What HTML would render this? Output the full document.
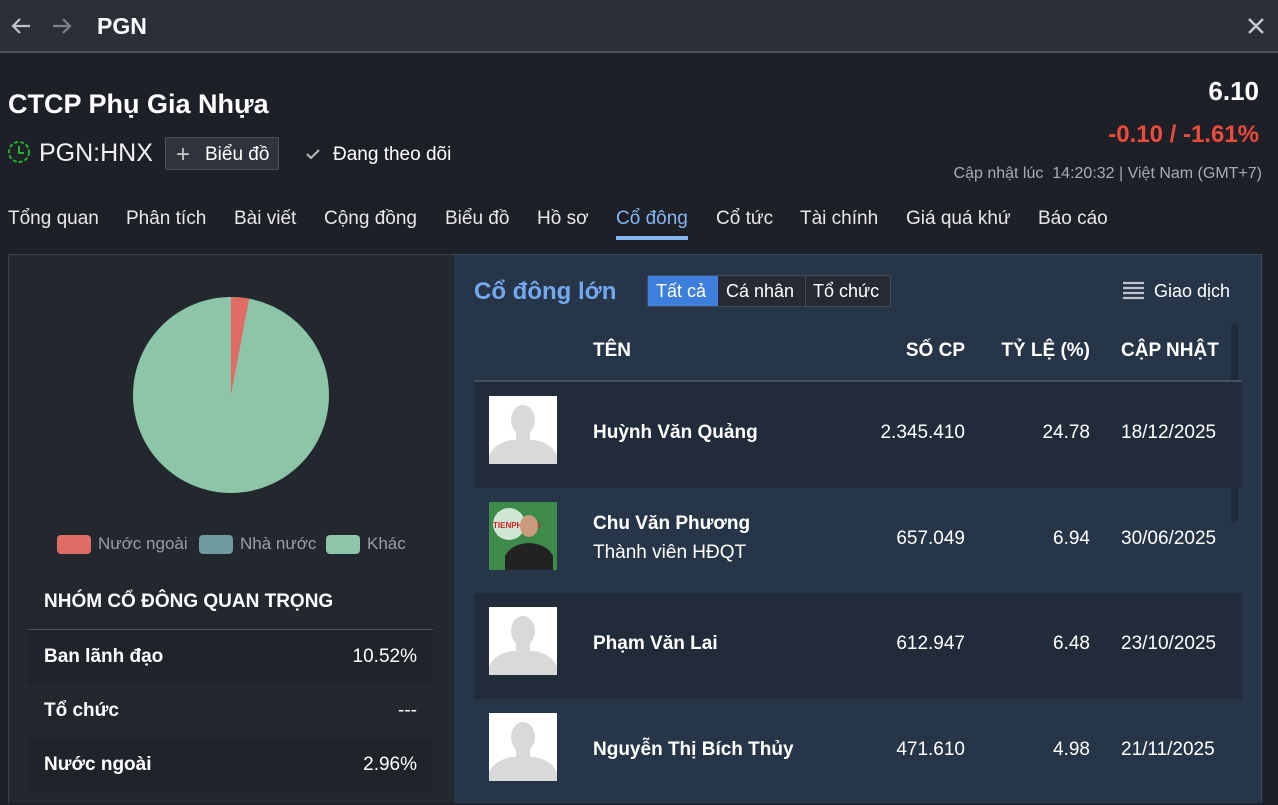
<!DOCTYPE html>
<html><head><meta charset="utf-8"><style>
*{margin:0;padding:0;box-sizing:border-box}
body{width:1278px;height:803px;overflow:hidden;background:#1d2027;font-family:"Liberation Sans",sans-serif;color:#fff;position:relative}
.a{position:absolute;white-space:nowrap}
.top{position:absolute;left:0;top:0;width:1278px;height:53px;background:#2b2f38;border-bottom:2px solid #4a4e56}
.tab{position:absolute;top:208px;font-size:19px;color:#e8e8e8}
.lrow{position:absolute;left:28px;width:405px;height:54px}
.lrow span{position:absolute;top:16px;font-size:19px;font-weight:bold}
.lrow b{position:absolute;right:16px;top:16px;font-size:19px;font-weight:normal}
.row{position:absolute;left:474px;width:768px;height:106px}
.av{position:absolute;left:15px;top:14px;width:68px;height:68px;background:#fff;overflow:hidden}
.nm{position:absolute;left:119px;font-size:19px;font-weight:bold}
.c1{position:absolute;right:277px;font-size:19px}
.c2{position:absolute;right:152px;font-size:19px}
.c3{position:absolute;left:647px;font-size:19px}
</style></head><body>
<div class="top">
<svg class="a" style="left:10px;top:16px" width="22" height="20" viewBox="0 0 22 20"><path d="M20 10H3M10 3L3 10l7 7" stroke="#bfc2c7" stroke-width="2.2" fill="none"/></svg>
<svg class="a" style="left:51px;top:16px" width="22" height="20" viewBox="0 0 22 20"><path d="M2 10h17M12 3l7 7-7 7" stroke="#7d8189" stroke-width="2.2" fill="none"/></svg>
<div class="a" style="left:97px;top:13px;font-size:23px;font-weight:bold">PGN</div>
<svg class="a" style="left:1247px;top:17px" width="18" height="18" viewBox="0 0 18 18"><path d="M2 2l14 14M16 2L2 16" stroke="#c8cbd0" stroke-width="2.4"/></svg>
</div>
<div class="a" style="left:8px;top:89px;font-size:27px;font-weight:bold">CTCP Phụ Gia Nhựa</div>
<svg class="a" style="left:7px;top:140px" width="26" height="26" viewBox="0 0 26 26"><circle cx="12" cy="12" r="10" stroke="#1fb52e" stroke-width="2" fill="none" stroke-dasharray="4 2"/><path d="M12 6v7h5" stroke="#1fb52e" stroke-width="2" fill="none"/></svg>
<div class="a" style="left:39px;top:139px;font-size:25px;color:#f2f2f2">PGN:HNX</div>
<div class="a" style="left:165px;top:137px;width:114px;height:33px;background:#2e333c;border:1px solid #4a4f58;border-radius:2px"></div>
<div class="a" style="left:176px;top:141px;font-size:24px;color:#c8c8c8">+</div>
<div class="a" style="left:205px;top:144px;font-size:19px">Biểu đồ</div>
<svg class="a" style="left:305px;top:147px" width="16" height="14" viewBox="0 0 16 14"><path d="M2 7l4 4 8-8" stroke="#bbb" stroke-width="2" fill="none"/></svg>
<div class="a" style="left:333px;top:144px;font-size:19px">Đang theo dõi</div>
<div class="a" style="right:19px;top:76px;font-size:26px;font-weight:bold">6.10</div>
<div class="a" style="right:19px;top:121px;font-size:24px;font-weight:bold;color:#ee4b3b">-0.10 / -1.61%</div>
<div class="a" style="right:16px;top:165px;font-size:16px;color:#a9adb3">Cập nhật lúc&nbsp; 14:20:32 | Việt Nam (GMT+7)</div>
<div class="tab" style="left:8px">Tổng quan</div>
<div class="tab" style="left:126px">Phân tích</div>
<div class="tab" style="left:234px">Bài viết</div>
<div class="tab" style="left:324px">Cộng đồng</div>
<div class="tab" style="left:445px">Biểu đồ</div>
<div class="tab" style="left:537px">Hồ sơ</div>
<div class="tab" style="left:616px;color:#86b6f2">Cổ đông</div>
<div class="a" style="left:616px;top:236px;width:72px;height:4px;background:#86b6f2"></div>
<div class="tab" style="left:716px">Cổ tức</div>
<div class="tab" style="left:800px">Tài chính</div>
<div class="tab" style="left:906px">Giá quá khứ</div>
<div class="tab" style="left:1038px">Báo cáo</div>

<div class="a" style="left:8px;top:254px;width:447px;height:549px;background:#23272e;border:1px solid #3a3f48;border-bottom:none"></div>
<div class="a" style="left:454px;top:254px;width:808px;height:549px;background:#273548;border-top:1px solid #3a4a60;border-right:1px solid #3a4a60"></div>

<svg class="a" style="left:133px;top:297px" width="196" height="196" viewBox="0 0 196 196"><circle cx="98" cy="98" r="98" fill="#8cc5a8"/><path d="M98 98L98 0A98 98 0 0 1 116.1 1.7Z" fill="#e06c66"/></svg>
<div class="a" style="left:57px;top:535px;width:34px;height:19px;background:#e06c66;border-radius:4px"></div>
<div class="a" style="left:98px;top:534px;font-size:17px;color:#9a9ea4">Nước ngoài</div>
<div class="a" style="left:199px;top:535px;width:34px;height:19px;background:#6f9aa0;border-radius:4px"></div>
<div class="a" style="left:240px;top:534px;font-size:17px;color:#9a9ea4">Nhà nước</div>
<div class="a" style="left:326px;top:535px;width:34px;height:19px;background:#8cc5a8;border-radius:4px"></div>
<div class="a" style="left:367px;top:534px;font-size:17px;color:#9a9ea4">Khác</div>
<div class="a" style="left:44px;top:591px;font-size:19px;font-weight:bold">NHÓM CỔ ĐÔNG QUAN TRỌNG</div>
<div class="a" style="left:28px;top:629px;width:405px;height:1px;background:#4e535b"></div>
<div class="lrow" style="top:630px;background:#1f232a"><span style="left:16px">Ban lãnh đạo</span><b>10.52%</b></div>
<div class="lrow" style="top:684px"><span style="left:16px">Tổ chức</span><b>---</b></div>
<div class="lrow" style="top:738px;background:#1f232a"><span style="left:16px">Nước ngoài</span><b>2.96%</b></div>

<div class="a" style="left:474px;top:278px;font-size:24px;font-weight:bold;color:#74a8ee">Cổ đông lớn</div>
<div class="a" style="left:647px;top:275px;width:244px;height:32px;border:1px solid #454c56;border-radius:2px;background:#252a33"></div>
<div class="a" style="left:648px;top:276px;width:70px;height:30px;background:#3d7fdb"></div>
<div class="a" style="left:805px;top:276px;width:1px;height:30px;background:#454c56"></div>
<div class="a" style="left:656px;top:281px;font-size:18px">Tất cả</div>
<div class="a" style="left:726px;top:281px;font-size:18px">Cá nhân</div>
<div class="a" style="left:813px;top:281px;font-size:18px">Tổ chức</div>
<svg class="a" style="left:1123px;top:281px" width="21" height="20" viewBox="0 0 21 20"><path d="M0 2h21M0 7h21M0 12h21M0 17h21" stroke="#bfc4cc" stroke-width="2.2"/></svg>
<div class="a" style="left:1154px;top:281px;font-size:18px">Giao dịch</div>
<div class="a" style="left:1231px;top:324px;width:7px;height:198px;background:#1f2a39;border-radius:4px"></div>
<div class="a" style="left:593px;top:340px;font-size:19px;font-weight:bold">TÊN</div>
<div class="a" style="right:313px;top:340px;font-size:19px;font-weight:bold">SỐ CP</div>
<div class="a" style="right:188px;top:340px;font-size:19px;font-weight:bold">TỶ LỆ (%)</div>
<div class="a" style="left:1121px;top:340px;font-size:19px;font-weight:bold">CẬP NHẬT</div>
<div class="a" style="left:474px;top:380px;width:768px;height:2px;background:#44505f"></div>

<svg width="0" height="0" style="position:absolute"><defs><g id="p"><rect width="68" height="68" fill="#fff"/><ellipse cx="34" cy="24" rx="12" ry="15" fill="#d9d9d9"/><path d="M0 68V60q4-12 22-16h24q18 4 22 16v8Z" fill="#d9d9d9"/><rect x="27" y="36" width="14" height="10" fill="#d9d9d9"/></g></defs></svg>

<div class="row" style="top:382px;background:#222b3a"><svg class="av" viewBox="0 0 68 68"><use href="#p"/></svg><div class="nm" style="top:40px">Huỳnh Văn Quảng</div><div class="c1" style="top:40px">2.345.410</div><div class="c2" style="top:40px">24.78</div><div class="c3" style="top:40px">18/12/2025</div></div>
<div class="row" style="top:488px"><svg class="av" viewBox="0 0 68 68"><rect width="68" height="68" fill="#3d8a4a"/><circle cx="20" cy="22" r="16" fill="#cfe6d3"/><text x="4" y="26" font-size="8" fill="#c22" font-weight="bold" font-family="Liberation Sans">TIENPHONG</text><ellipse cx="40" cy="24" rx="9" ry="11" fill="#c99a7e"/><path d="M16 68V54q6-12 24-13q18 1 24 13v14Z" fill="#222"/></svg><div class="nm" style="top:25px">Chu Văn Phương</div><div class="a" style="left:119px;top:54px;font-size:19px">Thành viên HĐQT</div><div class="c1" style="top:40px">657.049</div><div class="c2" style="top:40px">6.94</div><div class="c3" style="top:40px">30/06/2025</div></div>
<div class="row" style="top:593px;background:#222b3a"><svg class="av" viewBox="0 0 68 68"><use href="#p"/></svg><div class="nm" style="top:40px">Phạm Văn Lai</div><div class="c1" style="top:40px">612.947</div><div class="c2" style="top:40px">6.48</div><div class="c3" style="top:40px">23/10/2025</div></div>
<div class="row" style="top:699px"><svg class="av" viewBox="0 0 68 68"><use href="#p"/></svg><div class="nm" style="top:40px">Nguyễn Thị Bích Thủy</div><div class="c1" style="top:40px">471.610</div><div class="c2" style="top:40px">4.98</div><div class="c3" style="top:40px">21/11/2025</div></div>
</body></html>
